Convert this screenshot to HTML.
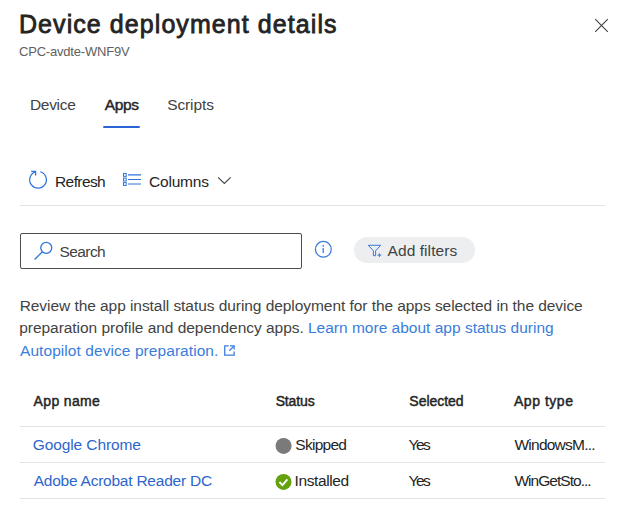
<!DOCTYPE html>
<html><head><meta charset="utf-8">
<style>
html,body{margin:0;padding:0;background:#fff;width:618px;height:508px;overflow:hidden;position:relative}
body{font-family:"Liberation Sans",sans-serif;color:#242424}
.a{position:absolute;white-space:nowrap;line-height:1}
svg{position:absolute;overflow:visible}
</style></head>
<body>
<div class="a" id="title" style="left:19.00px;top:11.77px;font-size:25px;font-weight:400;color:#242424;-webkit-text-stroke:0.8px #242424;letter-spacing:1.070px">Device deployment details</div>
<svg style="left:590px;top:14px" width="24" height="24" viewBox="0 0 24 24"><path d="M5.2 5.2L17.8 17.8M17.8 5.2L5.2 17.8" stroke="#424242" stroke-width="1.1" fill="none"/></svg>
<div class="a" id="sub" style="left:19.00px;top:45.00px;font-size:13px;color:#616161;letter-spacing:-0.200px">CPC-avdte-WNF9V</div>

<div class="a" id="t1" style="left:30.00px;top:96.96px;font-size:15.5px;color:#424242;letter-spacing:-0.320px">Device</div>
<div class="a" id="t2" style="left:104.84px;top:96.96px;font-size:15.5px;font-weight:400;-webkit-text-stroke:0.45px #242424;color:#242424;letter-spacing:-0.426px">Apps</div>
<div class="a" id="t3" style="left:167.18px;top:96.96px;font-size:15.5px;color:#424242;letter-spacing:-0.106px">Scripts</div>
<div style="position:absolute;left:103px;top:126px;width:37px;height:2px;border-radius:1px;background:#2b64d6"></div>

<svg style="left:25px;top:167px" width="25" height="25" viewBox="0 0 25 25"><path d="M15.3 4.75A8.35 8.35 0 1 1 10.3 4.9" stroke="#2f74dc" stroke-width="1.25" fill="none"/><path d="M6.2 4.3H10.6V8.6" stroke="#2f74dc" stroke-width="1.3" fill="none"/></svg>
<div class="a" id="refresh" style="left:55.00px;top:173.50px;font-size:15.5px;color:#242424;letter-spacing:-0.591px">Refresh</div>
<svg style="left:120px;top:170px" width="25" height="20" viewBox="0 0 25 20"><rect x="3.5" y="3.45" width="2.7" height="2.9" stroke="#2f74dc" stroke-width="1" fill="none"/><rect x="3.5" y="8.05" width="2.7" height="2.9" stroke="#2f74dc" stroke-width="1" fill="none"/><rect x="3.5" y="12.55" width="2.7" height="2.9" stroke="#2f74dc" stroke-width="1" fill="none"/><path d="M8 4.9H21M8 9.5H21M8 14H21" stroke="#2f74dc" stroke-width="1.2"/></svg>
<div class="a" id="columns" style="left:148.98px;top:173.96px;font-size:15.5px;color:#242424;letter-spacing:-0.186px">Columns</div>
<svg style="left:212px;top:170px" width="25" height="20" viewBox="0 0 25 20"><path d="M6.1 7.3L12.35 13.5L18.6 7.3" stroke="#424242" stroke-width="1.1" fill="none"/></svg>
<div style="position:absolute;left:20px;top:205px;width:585px;height:1px;background:#e1e3e4"></div>

<div style="position:absolute;left:20px;top:233px;width:280px;height:34px;border:1px solid #4f4d4a;border-radius:2px"></div>
<svg style="left:30px;top:238px" width="26" height="26" viewBox="0 0 26 26"><circle cx="16.25" cy="9.85" r="5.5" stroke="#2f74dc" stroke-width="1.3" fill="none"/><path d="M4.6 21.5L12.4 13.7" stroke="#2f74dc" stroke-width="1.3"/></svg>
<div class="a" id="search" style="left:59.54px;top:243.66px;font-size:15.5px;color:#424242;letter-spacing:-0.588px">Search</div>

<svg style="left:311px;top:237px" width="25" height="25" viewBox="0 0 25 25"><circle cx="12.35" cy="12.3" r="7.9" stroke="#3a7ddb" stroke-width="1.25" fill="none"/><circle cx="12.2" cy="8.85" r="0.85" fill="#3a7ddb"/><path d="M12.2 11.1V16" stroke="#3a7ddb" stroke-width="1.3"/></svg>

<div style="position:absolute;left:354px;top:237px;width:121px;height:26px;border-radius:13px;background:#edeef0"></div>
<svg style="left:364px;top:240px" width="22" height="20" viewBox="0 0 22 20"><path d="M4.3 5.3H16.7L11.6 10.8V15.7H9.4V10.8Z" stroke="#3778dc" stroke-width="1.0" fill="none" stroke-linejoin="round"/><path d="M13.5 15.1H17.3M15.4 13.2V17" stroke="#4a86e0" stroke-width="1.05"/></svg>
<div class="a" id="addf" style="left:387.54px;top:243.28px;font-size:15.5px;color:#424242;letter-spacing:0.074px">Add filters</div>

<div class="a" id="p1" style="left:19.68px;top:298.00px;font-size:15.5px;color:#424242;letter-spacing:-0.058px">Review the app install status during deployment for the apps selected in the device</div>
<div class="a" id="p2" style="left:19.20px;top:319.58px;font-size:15.5px;color:#424242;letter-spacing:-0.04px">preparation profile and dependency apps. <span id="lnk" style="color:#3a7ddb;letter-spacing:0.005px">Learn more about app status during</span></div>
<div class="a" id="p3" style="left:20.00px;top:342.58px;font-size:15.5px;color:#3a7ddb;letter-spacing:0.068px">Autopilot device preparation.</div>
<svg style="left:220px;top:341px" width="20" height="20" viewBox="0 0 20 20"><path d="M8.7 4.95H4.75V14.15H14.15V10.4" stroke="#3a7ddb" stroke-width="1.3" fill="none"/><path d="M10 4.95H14.15V8.5" stroke="#3a7ddb" stroke-width="1.3" fill="none"/><path d="M9.25 9.8L14 5.1" stroke="#3a7ddb" stroke-width="1.3"/></svg>

<div class="a" id="h1" style="left:33.54px;top:394.00px;font-size:14px;font-weight:400;-webkit-text-stroke:0.45px #242424;color:#242424;letter-spacing:0.360px">App name</div>
<div class="a" id="h2" style="left:275.68px;top:394.00px;font-size:14px;font-weight:400;-webkit-text-stroke:0.45px #242424;color:#242424;letter-spacing:-0.140px">Status</div>
<div class="a" id="h3" style="left:409.34px;top:394.00px;font-size:14px;font-weight:400;-webkit-text-stroke:0.45px #242424;color:#242424;letter-spacing:-0.022px">Selected</div>
<div class="a" id="h4" style="left:514.00px;top:394.00px;font-size:14px;font-weight:400;-webkit-text-stroke:0.45px #242424;color:#242424;letter-spacing:0.526px">App type</div>
<div style="position:absolute;left:20px;top:426px;width:585px;height:1px;background:#e1e3e4"></div>

<div class="a" id="r1c1" style="left:32.68px;top:436.50px;font-size:15.5px;color:#2d66cc;letter-spacing:-0.093px">Google Chrome</div>
<svg style="left:272px;top:435px" width="24" height="22" viewBox="0 0 24 22"><circle cx="11.55" cy="10.9" r="8" fill="#7a7a7a"/></svg>
<div class="a" id="r1c2" style="left:295.34px;top:436.50px;font-size:15.5px;color:#242424;letter-spacing:-0.744px">Skipped</div>
<div class="a" id="r1c3" style="left:408.50px;top:436.50px;font-size:15.5px;color:#242424;letter-spacing:-1.540px">Yes</div>
<div class="a" id="r1c4" style="left:514.46px;top:436.50px;font-size:15.5px;color:#242424;letter-spacing:-0.756px">WindowsM...</div>
<div style="position:absolute;left:20px;top:462px;width:585px;height:1px;background:#e1e3e4"></div>

<div class="a" id="r2c1" style="left:33.68px;top:472.66px;font-size:15.5px;color:#2d66cc;letter-spacing:-0.233px">Adobe Acrobat Reader DC</div>
<svg style="left:272px;top:471px" width="24" height="22" viewBox="0 0 24 22"><circle cx="11.5" cy="10.9" r="8" fill="#63a20c"/><path d="M7.4 11L10.4 14.1L15.4 8.4" stroke="#fff" stroke-width="1.9" fill="none"/></svg>
<div class="a" id="r2c2" style="left:294.54px;top:472.66px;font-size:15.5px;color:#242424;letter-spacing:-0.400px">Installed</div>
<div class="a" id="r2c3" style="left:408.50px;top:472.66px;font-size:15.5px;color:#242424;letter-spacing:-1.540px">Yes</div>
<div class="a" id="r2c4" style="left:514.46px;top:472.66px;font-size:15.5px;color:#242424;letter-spacing:-0.974px">WinGetSto...</div>
<div style="position:absolute;left:20px;top:498px;width:585px;height:1px;background:#e1e3e4"></div>
</body></html>
